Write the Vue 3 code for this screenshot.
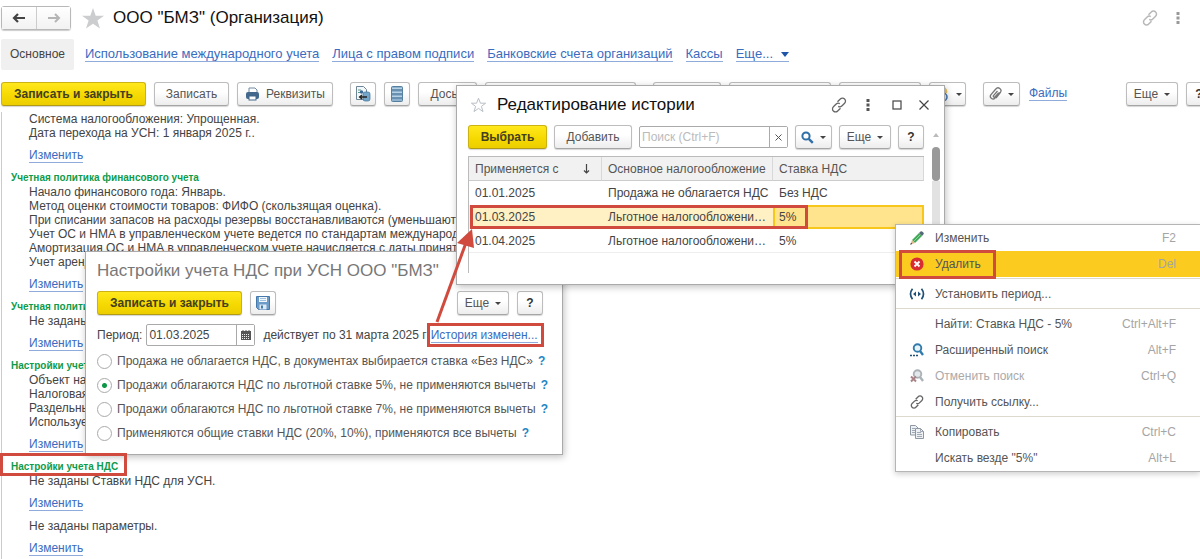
<script setup>
import { ref } from 'vue'

const navLinks = [
  'Использование международного учета',
  'Лица с правом подписи',
  'Банковские счета организаций',
  'Кассы',
]

const sections = [
  {
    title: '',
    blocks: [['Система налогообложения: Упрощенная.', 'Дата перехода на УСН: 1 января 2025 г..']],
  },
  {
    title: 'Учетная политика финансового учета',
    blocks: [[
      'Начало финансового года: Январь.',
      'Метод оценки стоимости товаров: ФИФО (скользящая оценка).',
      'При списании запасов на расходы резервы восстанавливаются (уменьшают с',
      'Учет ОС и НМА в управленческом учете ведется по стандартам международн',
      'Амортизация ОС и НМА в управленческом учете начисляется с даты принятия',
      'Учет аренды',
    ]],
  },
  { title: 'Учетная политика', blocks: [['Не заданы']] },
  {
    title: 'Настройки учета',
    blocks: [['Объект нал', 'Налоговая', 'Раздельный', 'Используется']],
  },
  {
    title: 'Настройки учета НДС',
    blocks: [['Не заданы Ставки НДС для УСН.'], ['Не заданы параметры.']],
  },
]

const period = ref('01.03.2025')
const search = ref('')
const mode = ref(1)
const modes = [
  'Продажа не облагается НДС, в документах выбирается ставка «Без НДС»',
  'Продажи облагаются НДС по льготной ставке 5%, не применяются вычеты',
  'Продажи облагаются НДС по льготной ставке 7%, не применяются вычеты',
  'Применяются общие ставки НДС (20%, 10%), применяются все вычеты',
]

const rows = [
  { date: '01.01.2025', kind: 'Продажа не облагается НДС', rate: 'Без НДС' },
  { date: '01.03.2025', kind: 'Льготное налогообложени…', rate: '5%', selected: true },
  { date: '01.04.2025', kind: 'Льготное налогообложени…', rate: '5%' },
]

const menu = [
  [
    { text: 'Изменить', key: 'F2', icon: 'edit' },
    { text: 'Удалить', key: 'Del', icon: 'delete', active: true },
  ],
  [{ text: 'Установить период...', key: '', icon: 'period' }],
  [
    { text: 'Найти: Ставка НДС - 5%', key: 'Ctrl+Alt+F', icon: '' },
    { text: 'Расширенный поиск', key: 'Alt+F', icon: 'find' },
    { text: 'Отменить поиск', key: 'Ctrl+Q', icon: 'unfind', disabled: true },
    { text: 'Получить ссылку...', key: '', icon: 'link' },
  ],
  [
    { text: 'Копировать', key: 'Ctrl+C', icon: 'copy' },
    { text: 'Искать везде "5%"', key: 'Alt+L', icon: '' },
  ],
]
</script>

<template>
  <div class="page">
    <header class="head">
      <div class="history">
        <button type="button" aria-label="Назад">
          <svg width="14" height="10" viewBox="0 0 14 10"><path d="M6 1 2 5l4 4M2.500 5H13" fill="none" stroke="#444" stroke-width="2.200" /></svg>
        </button>
        <button type="button" aria-label="Вперед">
          <svg width="14" height="10" viewBox="0 0 14 10"><path d="M8 1l4 4-4 4M11.500 5H1" fill="none" stroke="#b5b5b5" stroke-width="2" /></svg>
        </button>
      </div>
      <svg class="star" width="22" height="21" viewBox="0 0 22 21"><path d="M11 0l2.700 7.700H22l-6.600 4.900L18 20.500 11 15.700 4 20.500l2.600-7.900L0 7.700h8.300z" fill="#cbcdcf" /></svg>
      <h1>ООО "БМЗ" (Организация)</h1>
      <div class="head-tools">
        <svg width="16" height="16" viewBox="0 0 16 16" fill="none" stroke="#b8b8b8" stroke-width="1.500"><path d="M6.500 4.800 9.300 2a2.900 2.900 0 0 1 4.300 0 2.900 2.900 0 0 1 0 4.200L10.800 9a2.900 2.900 0 0 1-3.600.4M9.500 11.200 6.700 14a2.900 2.900 0 0 1-4.300 0 2.900 2.900 0 0 1 0-4.200L5.200 7a2.900 2.900 0 0 1 3.600-.4" /></svg>
        <svg width="4" height="12" viewBox="0 0 4 12" fill="#999"><path d="M.5 0h3v3h-3zM.5 4.500h3v3h-3zM.5 9h3v3h-3z" /></svg>
      </div>
    </header>

    <nav class="nav">
      <span class="tab">Основное</span>
      <a v-for="l in navLinks" :key="l" href="#">{{ l }}</a>
      <a href="#" class="more">Еще... <i></i></a>
    </nav>

    <div class="toolbar">
      <button type="button" class="btn primary w-main">Записать и закрыть</button>
      <button type="button" class="btn w-save">Записать</button>
      <button type="button" class="btn w-req">
        <svg width="15" height="14" viewBox="0 0 15 14"><path d="M4 1h6l2 2v3H4z" fill="#fff" stroke="#6f8aa3" /><rect x="1" y="5" width="13" height="7" rx="2" fill="#43698c" /><rect x="4" y="9" width="7" height="4" fill="#fff" stroke="#43698c" /></svg>
        Реквизиты
      </button>
      <button type="button" class="btn icon gap" aria-label="Перейти">
        <svg width="16" height="16" viewBox="0 0 16 16"><path d="M1.500.5h7l3 3v10h-10z" fill="#f4f7f9" stroke="#6e8597" /><path d="M3 4h3M3 6.500h2" stroke="#5d9b84" /><circle cx="6.500" cy="6" r="1.700" fill="#37699a" /><rect x="8" y="6" width="7" height="9" rx="2" fill="#73a6c9" stroke="#3c7198" stroke-width=".7" /><path d="M12 11H5M7 9l-2.500 2L7 13" fill="none" stroke="#222" stroke-width="1.300" /></svg>
      </button>
      <button type="button" class="btn icon" aria-label="Список">
        <svg width="12" height="16" viewBox="0 0 12 16"><rect x=".5" y=".5" width="11" height="15" rx="1" fill="#8fb3cf" stroke="#56809f" /><path d="M1 4h10M1 8h10M1 12h10" stroke="#456f91" /><path d="M1 2.500h10M1 6.500h10M1 10.500h10" stroke="#b8d2e5" /></svg>
      </button>
      <button type="button" class="btn w-doc">Досье</button>
      <button type="button" class="btn w-a" aria-label="Отчеты"></button>
      <button type="button" class="btn w-b gap" aria-label="Печать"></button>
      <button type="button" class="btn w-c" aria-label="Создать на основании"></button>
      <button type="button" class="btn w-d" aria-label="Проверить"></button>
      <button type="button" class="btn drop" aria-label="Обмен">
        <svg width="16" height="16" viewBox="0 0 16 16"><path d="M6 1a5 5 0 0 1 7 6H6z" fill="#ebc45c" /><circle cx="9" cy="11" r="4" fill="#e8eef5" stroke="#3c70b0" stroke-width="1.500" /><path d="M6 10l5 3" stroke="#ca4c42" stroke-width="1.500" /></svg>
        <i></i>
      </button>
      <button type="button" class="btn drop gap" aria-label="Присоединенные файлы">
        <svg width="13" height="14" viewBox="0 0 13 14" fill="none" stroke="#777" stroke-width="1.300"><path d="M10.500 5.500 6 11a2.500 2.500 0 0 1-4-3.300L6.800 2a2.800 2.800 0 0 1 4.500 3.500L7 11M8.500 4 4.500 8.700a1 1 0 0 0 1.500 1.300L9.500 6" /></svg>
        <i></i>
      </button>
      <a href="#" class="files">Файлы</a>
      <button type="button" class="btn etc push">Еще <i></i></button>
      <button type="button" class="btn icon q edge">?</button>
    </div>

    <main class="content">
      <section v-for="(s, si) in sections" :key="si">
        <h2 v-if="s.title">{{ s.title }}</h2>
        <div v-for="(b, bi) in s.blocks" :key="bi" class="block">
          <p v-for="t in b" :key="t">{{ t }}</p>
          <a href="#">Изменить</a>
        </div>
      </section>
    </main>

    <section class="win settings" aria-label="Настройки учета НДС">
      <h3>Настройки учета НДС при УСН ООО "БМЗ"</h3>
      <div class="row">
        <button type="button" class="btn primary w-main">Записать и закрыть</button>
        <button type="button" class="btn icon" aria-label="Записать">
          <svg width="14" height="14" viewBox="0 0 14 14"><path d="M.5.5h13v13h-11l-2-2z" fill="#6d9bc8" stroke="#4679ab" /><rect x="3" y="1" width="8" height="5" fill="#f3f8fc" /><path d="M4 2.500h6M4 4.500h6" stroke="#9ebfdd" /><rect x="3.500" y="8.500" width="7" height="5" fill="#dceaf5" /><rect x="5" y="9.500" width="2" height="3" fill="#4679ab" /></svg>
        </button>
        <button type="button" class="btn etc push">Еще <i></i></button>
        <button type="button" class="btn icon q">?</button>
      </div>
      <div class="period">
        <label for="period">Период:</label>
        <div class="field">
          <input id="period" v-model="period" type="text" />
          <button type="button" aria-label="Выбрать дату">
            <svg width="10" height="10" viewBox="0 0 10 10"><path d="M0 1h10v9H0z" fill="#555" /><path d="M2 0v2M5 0v2M8 0v2" stroke="#555" /><path d="M1 4.500h8M1 6.500h8M1 8.500h8" stroke="#eee" stroke-dasharray="1 1" /></svg>
          </button>
        </div>
        <span class="until">действует по 31 марта 2025 г</span>
        <a href="#">История изменен...</a>
      </div>
      <div class="modes">
        <div v-for="(m, i) in modes" :key="i" class="mode">
          <input :id="'mode' + i" v-model="mode" type="radio" name="mode" :value="i" />
          <label :for="'mode' + i">{{ m }}</label>
          <button type="button" class="hint">?</button>
        </div>
      </div>
    </section>

    <section class="win editor" aria-label="Редактирование истории">
      <div class="caption">
        <svg width="17" height="16" viewBox="0 0 17 16"><path d="M8.500 1.200l1.900 5h5.200l-4.200 3.200 1.600 5.200-4.500-3.200L4 14.600l1.600-5.200L1.400 6.200h5.200z" fill="none" stroke="#b9bfc6" /></svg>
        <h3>Редактирование истории</h3>
        <div class="caption-tools">
          <svg width="16" height="16" viewBox="0 0 16 16" fill="none" stroke="#666" stroke-width="1.300"><path d="M6.500 4.800 9.300 2a2.900 2.900 0 0 1 4.300 0 2.900 2.900 0 0 1 0 4.200L10.800 9a2.900 2.900 0 0 1-3.600.4M9.500 11.200 6.700 14a2.900 2.900 0 0 1-4.300 0 2.900 2.900 0 0 1 0-4.200L5.200 7a2.900 2.900 0 0 1 3.600-.4" /></svg>
          <svg width="16" height="12" viewBox="0 0 16 12" fill="#555"><path d="M6.500 0h3v3h-3zM6.500 4.500h3v3h-3zM6.500 9h3v3h-3z" /></svg>
          <svg width="16" height="10" viewBox="0 0 16 10"><rect x="4" y="1" width="8" height="8" fill="none" stroke="#444" stroke-width="1.200" /></svg>
          <svg width="12" height="12" viewBox="0 0 12 12"><path d="M1.500 1.500l9 9M10.500 1.500l-9 9" stroke="#444" stroke-width="1.200" /></svg>
        </div>
      </div>
      <div class="row">
        <button type="button" class="btn primary w-pick">Выбрать</button>
        <button type="button" class="btn w-add">Добавить</button>
        <div class="field search">
          <input v-model="search" type="text" aria-label="Поиск" placeholder="Поиск (Ctrl+F)" />
          <button type="button" aria-label="Очистить">
            <svg width="7" height="7" viewBox="0 0 7 7"><path d="M.5.5l6 6M6.500.5l-6 6" stroke="#555" /></svg>
          </button>
        </div>
        <button type="button" class="btn drop" aria-label="Найти">
          <svg width="13" height="13" viewBox="0 0 13 13" fill="none" stroke="#2f6fa8"><circle cx="5" cy="5" r="3.600" stroke-width="2" /><path d="M7.800 7.800l4 4" stroke-width="2.400" /></svg>
          <i></i>
        </button>
        <button type="button" class="btn etc">Еще <i></i></button>
        <button type="button" class="btn icon q">?</button>
      </div>
      <div class="grid">
        <table>
          <thead>
            <tr>
              <th class="c-date"><div class="sorted">Применяется с
                <svg width="7" height="10" viewBox="0 0 7 10"><path d="M3.500 0v9M1 6.500 3.500 9 6 6.500" fill="none" stroke="#444" stroke-width="1.200" /></svg></div></th>
              <th class="c-kind">Основное налогообложение</th>
              <th>Ставка НДС</th>
            </tr>
          </thead>
          <tbody>
            <tr v-for="r in rows" :key="r.date" :class="{ selected: r.selected }">
              <td>{{ r.date }}</td>
              <td>{{ r.kind }}</td>
              <td>{{ r.rate }}</td>
            </tr>
          </tbody>
        </table>
      </div>
      <div class="scroll"><svg width="6" height="4" viewBox="0 0 6 4"><path d="M3 0l3 4H0z" fill="#bbb" /></svg><i></i></div>
    </section>

    <div class="menu" role="menu">
      <div v-for="(g, gi) in menu" :key="gi" class="group">
        <button v-for="m in g" :key="m.text" type="button" role="menuitem" :class="{ active: m.active }" :disabled="m.disabled">
          <span class="pic">
            <svg v-if="m.icon === 'edit'" width="14" height="14" viewBox="0 0 14 14"><path d="M2 9 9 2l3 3-7 7z" fill="#43a95a" /><path d="M3.500 10.500 10.500 3.500" stroke="#8fd39c" /><path d="M9 2l1.500-1.500q1-.8 2 .2l.8.800q1 1 0 2L12 5z" fill="#55687c" /><path d="M2 9l3 3-4.500 1.500z" fill="#dcb98c" /><path d="M1 11.800.2 13.800l2-.8z" fill="#333" /></svg>
            <svg v-else-if="m.icon === 'delete'" width="14" height="14" viewBox="0 0 14 14"><circle cx="7" cy="7" r="6.600" fill="#d92b32" /><path d="M4.500 4.500l5 5M9.500 4.500l-5 5" stroke="#fff" stroke-width="1.800" /></svg>
            <svg v-else-if="m.icon === 'period'" width="16" height="12" viewBox="0 0 16 12"><path d="M3.500.8Q-.5 6 3.500 11.200M12.500.8q4 5.200 0 10.400" fill="none" stroke="#1e5078" stroke-width="1.700" /><path d="M7 3.500v5L4 6zM9 3.500v5L12 6z" fill="#1e5078" /></svg>
            <svg v-else-if="m.icon === 'find'" width="14" height="14" viewBox="0 0 14 14"><circle cx="7.500" cy="5" r="3.800" fill="#e9f3fa" stroke="#2f7bab" stroke-width="1.900" /><path d="M10 8l3 4" stroke="#2f7bab" stroke-width="2.400" /><path d="M0 12.500h2M3 12.500h2M6 12.500h2" stroke="#1e5078" stroke-width="1.600" /></svg>
            <svg v-else-if="m.icon === 'unfind'" width="14" height="14" viewBox="0 0 14 14"><circle cx="7.500" cy="5" r="3.800" fill="#e5e8ea" stroke="#aab2b8" stroke-width="1.900" /><path d="M10 8l3 4" stroke="#aab2b8" stroke-width="2.400" /><path d="M1 7.500l5 5M6 7.500l-5 5" stroke="#a98286" stroke-width="2" /></svg>
            <svg v-else-if="m.icon === 'link'" width="14" height="14" viewBox="0 0 16 16" fill="none" stroke="#666" stroke-width="1.500"><path d="M6.500 4.800 9.300 2a2.900 2.900 0 0 1 4.300 0 2.900 2.900 0 0 1 0 4.200L10.800 9a2.900 2.900 0 0 1-3.600.4M9.500 11.200 6.700 14a2.900 2.900 0 0 1-4.300 0 2.900 2.900 0 0 1 0-4.200L5.200 7a2.900 2.900 0 0 1 3.600-.4" /></svg>
            <svg v-else-if="m.icon === 'copy'" width="15" height="14" viewBox="0 0 15 14" stroke="#8d98a3"><path d="M.5.500h5l2.500 2.500v7H.5z" fill="#eef1f4" /><path d="M2 3.500h3M2 5.500h4M2 7.500h4" stroke-width=".8" /><path d="M5.500 3.500h5L13.500 6.500v7h-8z" fill="#eef1f4" /><path d="M7 7.500h4M7 9.500h5M7 11.500h5M10.500 3.500v3h3" fill="none" stroke-width=".8" /></svg>
          </span>
          <span>{{ m.text }}</span>
          <kbd>{{ m.key }}</kbd>
        </button>
      </div>
    </div>

    <svg class="marks" width="1200" height="559" viewBox="0 0 1200 559" fill="none" stroke="#d04a3e" stroke-width="3">
      <rect x="1.500" y="454.500" width="124" height="20" />
      <rect x="428.500" y="324.500" width="114" height="21" />
      <rect x="471.500" y="206.500" width="335" height="21" />
      <rect x="900.500" y="251.500" width="94" height="26" />
      <path d="M437 322 467 240" />
      <path d="M472 229 457 243 474 248z" fill="#d04a3e" stroke="none" />
    </svg>
  </div>
</template>

<style>
body {
  background: #fff;
}
</style>

<style scoped>
.page {
  position: relative;
  display: flex;
  flex-direction: column;
  min-height: 100vh;
  overflow: hidden;
  font: 12px/14px 'Liberation Sans', Arial, sans-serif;
  color: #444;
}
h1, h2, h3, p { margin: 0; font-weight: normal; }
button, input { font: inherit; color: inherit; box-sizing: border-box; }
svg { flex: none; }
a { color: #3a6cc0; text-decoration: none; border-bottom: 1px solid #8fabdc; }

.head { display: flex; align-items: center; height: 36px; }
.history { display: flex; margin: 0 11px 0 1px; border: 1px solid #b8b8b8; border-radius: 3px; box-shadow: 0 1px 1px #ccc; }
.history button { display: flex; align-items: center; justify-content: center; width: 34px; height: 22px; padding: 0; border: 0; background: linear-gradient(#fff, #f2f2f2); }
.history button + button { border-left: 1px solid #ccc; }
.head h1 { margin-left: 9px; font-size: 17px; line-height: 22px; color: #111; }
.head-tools { display: flex; align-items: center; gap: 18px; margin: 0 20px 0 auto; }

.nav { display: flex; align-items: center; gap: 13px; height: 31px; margin: 3px 0 12px 1px; white-space: nowrap; }
.nav a { font-size: 13px; line-height: 14px; }
.tab { padding: 0 9px; margin-right: -2px; line-height: 31px; background: #f0f0f0; border-radius: 2px; }
.more { display: flex; align-items: center; gap: 8px; }
.more i { border: 4px solid transparent; border-top: 5px solid #1f55a8; border-bottom: 0; }

.toolbar { display: flex; align-items: center; gap: 8px; margin-left: 1px; }
.row { display: flex; align-items: center; gap: 8px; }
.btn {
  display: flex; align-items: center; justify-content: center; gap: 6px; flex: none;
  height: 24px; padding: 0; border: 1px solid #bdbdbd; border-bottom-color: #a5a5a5; border-radius: 3px;
  background: linear-gradient(#fff 40%, #ededed); box-shadow: 0 1px 1px #d5d5d5; color: #555; white-space: nowrap;
}
.btn i { border: 3px solid transparent; border-top: 3px solid #444; border-bottom: 0; }
.primary { background: linear-gradient(#ffe81c, #f5d800 60%, #ecce00); border-color: #cdb213; border-bottom-color: #b19a14; font-weight: bold; color: #43401f; }
.icon { width: 26px; }
.q { font-weight: bold; color: #333; }
.drop { width: 37px; }
.etc { width: 52px; }
.gap { margin-left: 9px; }
.push { margin-left: auto; }
.edge { margin-right: -12px; }
.w-main { width: 145px; }
.w-save { width: 75px; }
.w-req { width: 96px; }
.w-doc { width: 59px; }
.w-a { width: 151px; }
.w-b { width: 68px; }
.w-c { width: 102px; }
.w-d { width: 82px; }
.w-pick { width: 79px; }
.w-add { width: 78px; }
.files { margin-left: 1px; line-height: 13px; }

.content { flex: 1; margin: 6px 0 0 1px; border-left: 1px solid #ccc; }
.content h2 { padding-left: 9px; font-size: 10px; line-height: 14px; font-weight: bold; color: #109b4b; }
.block { padding-left: 27px; margin-bottom: 8px; white-space: nowrap; }
.block a { display: inline-block; margin-top: 9px; line-height: 13px; }

.win { position: absolute; box-sizing: border-box; background: #fff; border: 1px solid #aaa; box-shadow: 1px 2px 7px rgba(0, 0, 0, .25); }
.settings { left: 85px; top: 251px; width: 478px; padding: 8px 19px 9px 11px; }
.settings h3 { font-size: 17px; line-height: 22px; color: #777; margin-bottom: 9px; white-space: nowrap; }
.period { display: flex; align-items: center; height: 22px; margin-top: 9px; white-space: nowrap; }
.period a { margin-left: 4px; line-height: 14px; }
.until { margin-left: 8px; }
.field { display: flex; box-sizing: border-box; width: 109px; height: 22px; margin-left: 4px; border: 1px solid #aaa; border-radius: 2px; }
.field input { flex: 1; min-width: 0; padding: 0 2px; border: 0; outline: 0; background: none; }
.field button { display: flex; align-items: center; justify-content: center; width: 18px; padding: 0; border: 0; border-left: 1px solid #aaa; background: #fff; }
.modes { padding-top: 3px; }
.mode { display: flex; align-items: center; height: 24px; white-space: nowrap; color: #555; }
.mode input { appearance: none; flex: none; width: 15px; height: 15px; margin: 0 5px 0 0; border: 1px solid #aaa; border-radius: 50%; }
.mode input:checked { background: radial-gradient(circle, #0e9647 2px, #fff 3px); }
.hint { padding: 0; margin-left: 5px; border: 0; background: none; font-weight: bold; color: #1f86c4; }

.editor { left: 456px; top: 85px; width: 489px; height: 200px; padding: 8px 20px 11px 11px; }
.caption { display: flex; align-items: center; gap: 10px; height: 22px; margin: 0 -10px 9px 2px; }
.caption h3 { font-size: 17px; line-height: 22px; color: #111; white-space: nowrap; }
.caption-tools { display: flex; align-items: center; gap: 13px; margin: 0 4px 0 auto; }
.editor .row { gap: 7px; }
.search { flex: 1; margin: 0; min-width: 0; }
.search input::placeholder { color: #bbb; }
.grid { margin-top: 7px; height: 117px; border: 1px solid #bbb; border-width: 1px 0 0 1px; box-sizing: border-box; }
table { width: 100%; border-collapse: separate; border-spacing: 0; table-layout: fixed; }
th, td { box-sizing: border-box; padding: 0 6px; text-align: left; font-weight: normal; white-space: nowrap; overflow: hidden; }
th { height: 24px; background: #f1f1f1; border-right: 1px solid #d8d8d8; border-bottom: 1px solid #ccc; color: #555; }
td { height: 24px; }
.c-date { width: 133px; }
.c-kind { width: 171px; }
.sorted { display: flex; align-items: center; justify-content: space-between; padding-right: 5px; }
tbody tr:last-child td { border-bottom: 1px solid #eee; }
.selected td { background: #fff1c4; }
.selected td:last-child { background: #ffe48d; border: 2px solid #f8c71b; padding-left: 4px; }
.scroll { position: absolute; top: 47px; right: 4px; bottom: 12px; width: 9px; display: flex; flex-direction: column; align-items: center; gap: 10px; }
.scroll::after { content: ''; flex: 1; width: 8px; margin-top: -10px; background: #e2e2e2; }
.scroll i { width: 8px; height: 34px; border-radius: 4px; background: #999; }

.menu { position: absolute; left: 895px; right: 0; top: 224px; background: #fff; border: 1px solid #b5b5b5; border-right: 0; box-shadow: 0 2px 6px rgba(0, 0, 0, .2); }
.group + .group { margin-top: 1px; border-top: 1px solid #ddd9cc; padding-top: 2px; }
.menu button { display: flex; align-items: center; width: 100%; height: 26px; padding: 0 24px 0 12px; border: 0; background: none; text-align: left; white-space: nowrap; color: #555; }
.menu button.active { background: #fbcc1f; }
.menu button:disabled { color: #aaa; }
.pic { display: flex; align-items: center; justify-content: center; width: 18px; margin-right: 9px; }
kbd { margin-left: auto; font: inherit; color: #a5a5a5; }
.marks { position: absolute; left: 0; top: 0; pointer-events: none; }
</style>
